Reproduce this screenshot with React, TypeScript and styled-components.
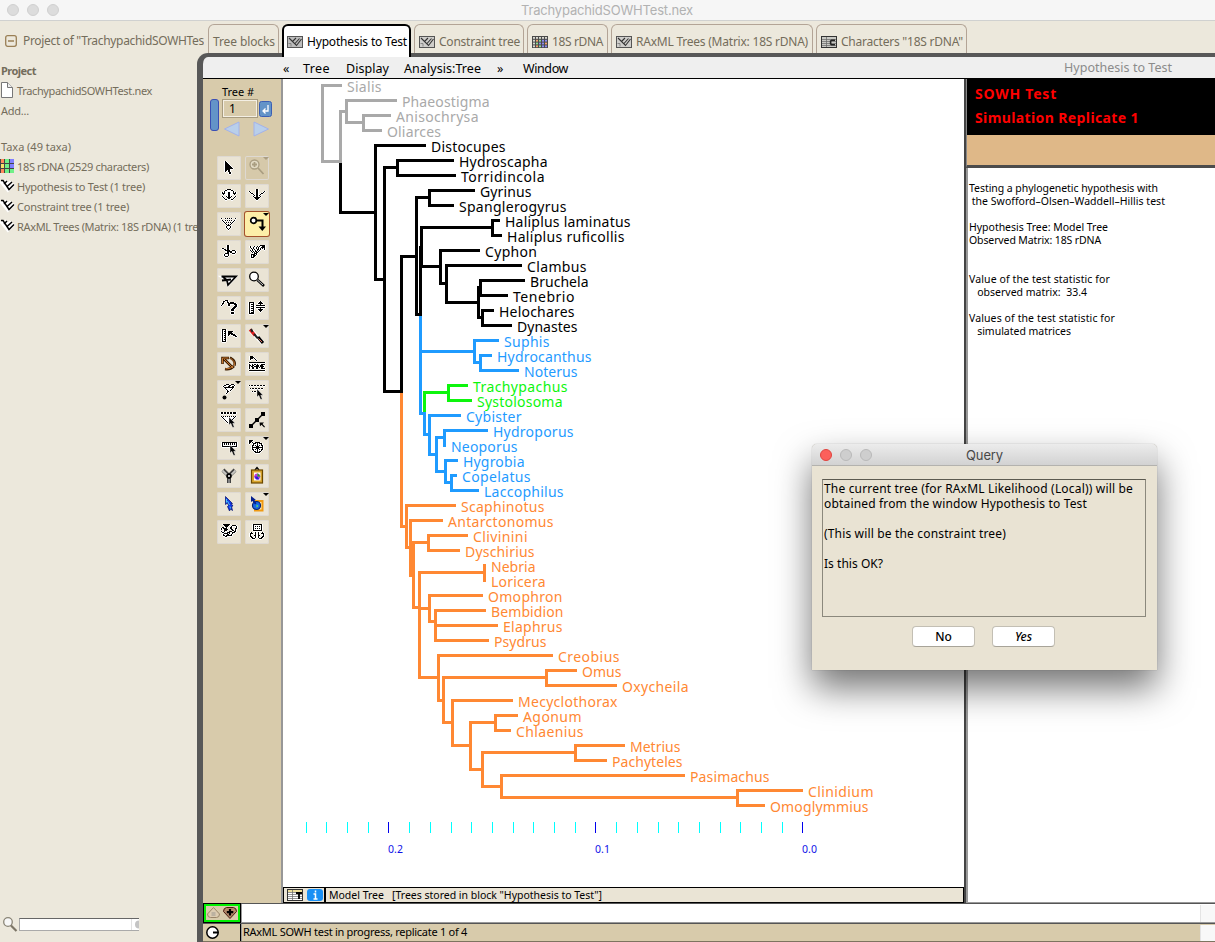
import React, { useLayoutEffect, useRef, useState } from "react";
import styled, { createGlobalStyle, css } from "styled-components";

const Global = createGlobalStyle`
  * { box-sizing: border-box; }
  html, body { margin: 0; padding: 0; overflow: hidden; }
  body { font-family: "Noto Sans", "Open Sans", sans-serif; font-size: 11px; color: #000; }
`;

/* ---------- text with a fixed advance width ---------- */

const FitBox = styled.span<{ $w: number }>`
  display: block;
  flex: none;
  width: ${(p) => p.$w}px;
  white-space: pre;
`;

function Fit({ w, children, className }: { w: number; children: string; className?: string }) {
  const ref = useRef<HTMLSpanElement>(null);
  const [tracking, setTracking] = useState(0);
  useLayoutEffect(() => {
    const natural = ref.current!.getBoundingClientRect().width;
    setTracking((w - natural) / children.length);
  }, []);
  return (
    <FitBox $w={w} className={className}>
      <span ref={ref} style={{ letterSpacing: tracking }}>{children}</span>
    </FitBox>
  );
}

/* ---------- window chrome ---------- */

const Window = styled.div`
  position: relative;
  display: flex;
  flex-direction: column;
  width: 1215px;
  height: 942px;
  overflow: hidden;
  background: #ece8dc;
`;

const TitleBar = styled.header`
  display: flex;
  align-items: center;
  flex: none;
  height: 21px;
  padding-left: 7px;
  background: #f6f6f6;
  border-bottom: 1px solid #d0d1d0;
  font-family: Inter, Roboto, sans-serif;
  font-size: 13px;
  color: #b2b2b2;
`;

const Light = styled.i<{ $c: string; $b: string }>`
  width: 12px;
  height: 12px;
  margin-right: 8px;
  border-radius: 50%;
  background: ${(p) => p.$c};
  border: 1px solid ${(p) => p.$b};
`;

const TitleText = styled.div`
  margin-left: 454px;
`;

const TabBar = styled.nav`
  display: flex;
  align-items: flex-end;
  flex: none;
  height: 32px;
  font-size: 12px;
  color: #746d5b;
  svg { flex: none; }
`;

const ProjectTab = styled.div`
  display: flex;
  align-items: center;
  gap: 6px;
  width: 204px;
  height: 29px;
  margin-right: 4px;
  padding: 4px 0 0 5px;
  overflow: hidden;
`;

const Tab = styled.div<{ $w: number; $active?: boolean }>`
  display: flex;
  align-items: center;
  gap: 4px;
  flex: none;
  width: ${(p) => p.$w}px;
  height: 29px;
  margin-right: 3px;
  padding: 5px 0 0 4px;
  border: 1px solid #b3a496;
  border-bottom: 0;
  border-radius: 6px 6px 0 0;
  ${(p) =>
    p.$active &&
    css`
      position: relative;
      z-index: 1;
      height: 33px;
      margin-bottom: -4px;
      padding: 0 0 0 3px;
      border: 2px solid #000;
      border-bottom: 0;
      background: #fff;
      color: #000;
    `}
`;

const Body = styled.div`
  display: flex;
  flex: 1;
  min-height: 0;
`;

const Sidebar = styled.aside`
  display: flex;
  flex-direction: column;
  width: 197px;
  padding-top: 7px;
  overflow: hidden;
  color: #746d5b;
`;

const SideRow = styled.div<{ $gap?: number; $bold?: boolean }>`
  display: flex;
  align-items: center;
  flex: none;
  height: 20px;
  padding-left: 1px;
  margin-top: ${(p) => p.$gap ?? 0}px;
  font-weight: ${(p) => (p.$bold ? 700 : 400)};
  svg { flex: none; margin-right: 1px; margin-left: -1px; }
`;

const SearchRow = styled.div`
  display: flex;
  align-items: center;
  margin-top: auto;
  height: 18px;
  margin-bottom: 9px;
  padding-left: 3px;
  gap: 1px;
`;

const SearchField = styled.div`
  width: 120px;
  height: 13px;
  background: #fff;
  border: 1px solid #aaa;
  border-top-color: #666;
  border-right: 0;
  display: flex;
  justify-content: flex-end;
`;

const Frame = styled.main`
  display: flex;
  flex-direction: column;
  flex: 1;
  min-width: 0;
  border-left: 6px solid #585858;
  border-top: 4px solid #585858;
  border-top-left-radius: 11px;
  background: #efefef;
`;

const MenuBar = styled.div`
  display: flex;
  align-items: center;
  flex: none;
  height: 22px;
  padding: 2px 0 0 80px;
  border-bottom: 1px solid #000;
  font-size: 12.5px;
`;

const MenuItem = styled(Fit)<{ $gap?: number }>`
  margin-right: ${(p) => p.$gap ?? 0}px;
`;

const MenuCaption = styled(Fit)`
  color: #8b8b8b;
  margin-top: -2px;
`;

const Work = styled.div`
  display: flex;
  flex: none;
  height: 824px;
`;

/* ---------- tool palette ---------- */

const Palette = styled.div`
  width: 78px;
  flex: none;
  background: #d8cbab;
`;

const Chooser = styled.div`
  display: flex;
  height: 77px;
  padding: 5px 0 0 7px;
`;

const BlueBar = styled.div`
  width: 9px;
  height: 32px;
  margin: 15px 3px 0 0;
  border: 1px solid #3b4fb4;
  border-radius: 3px;
  background: #6394c8;
`;

const ChooserMain = styled.div`
  display: flex;
  flex-direction: column;
`;

const NumberRow = styled.div`
  display: flex;
  align-items: center;
  gap: 1px;
`;

const NumberField = styled.div`
  width: 36px;
  height: 19px;
  padding-left: 6px;
  border: 1px solid #a89c80;
  outline: 1px solid #f4efe4;
  outline-offset: -2px;
  font-size: 12px;
  line-height: 17px;
`;

const ToolGrid = styled.div`
  display: grid;
  grid-template-columns: 24px 24px;
  grid-auto-rows: 24px;
  gap: 4px;
  padding-left: 14px;
`;

const ToolButton = styled.div<{ $state?: string }>`
  border-radius: 2px;
  background: ${(p) => (p.$state === "on" ? "#fdeea8" : p.$state === "dim" ? "#d6c9aa" : "#eae4d5")};
  box-shadow: ${(p) => (p.$state === "on" ? "0 0 0 1px #a4502a" : "inset 0 0 0 1px #ded9d2")};
  svg { display: block; }
`;

/* ---------- tree canvas ---------- */

const CanvasColumn = styled.div`
  display: flex;
  flex-direction: column;
  width: 683px;
  flex: none;
  border-left: 2px solid #979797;
  background: #fff;
`;

const TreeStatus = styled.div`
  display: flex;
  align-items: center;
  height: 16px;
  border: 1px solid #000;
  background: #eae4d5;
  font-size: 10.5px;
  padding-left: 3px;
  svg { flex: none; margin-right: 4px; }
`;

const StatusSplit = styled.div`
  width: 2px;
  height: 14px;
  margin: 0 3px 0 -3px;
  background: #000;
`;

/* ---------- result panel ---------- */

const Results = styled.section`
  flex: 1;
  display: flex;
  flex-direction: column;
  border-left: 2px solid #444;
`;

const ResultHead = styled.div`
  height: 56px;
  padding: 3px 0 0 8px;
  background: #000;
  color: #f00;
  font-size: 14px;
  font-weight: 700;
  line-height: 24px;
  border-left: 1px solid #888;
`;

const ResultTan = styled.div`
  height: 33px;
  border-left: 1px solid #888;
  background: #dfb888;
  border-bottom: 3px solid #4c4c4c;
`;

const ResultBody = styled.div`
  flex: 1;
  padding: 14px 0 0 1px;
  border-left: 2px solid #999;
  border-bottom: 1px solid #999;
  background: #fff;
  line-height: 13px;
  font-size: 10.5px;
`;

const Line = styled.div`
  height: 13px;
`;

/* ---------- bottom rows ---------- */

const BottomRow = styled.div<{ $fill: string; $h: number }>`
  display: flex;
  flex: none;
  height: ${(p) => p.$h}px;
  border-top: 1px solid #555;
  border-bottom: 1px solid ${(p) => (p.$fill === "#fff" ? "#999" : "#7d745f")};
  background: ${(p) => p.$fill};
`;

const GreenBox = styled.div`
  width: 36px;
  display: flex;
  align-items: center;
  justify-content: center;
  margin: 0 1px 0 1px;
  border: 2px solid #00ee00;
  box-shadow: 0 0 0 1px #000;
  background: #d8cbab;
`;

const ClockBox = styled.div`
  width: 38px;
  border-right: 1px solid #000;
  padding: 2px 0 0 3px;
`;

const RowText = styled.div`
  flex: 1;
  padding-left: 1px;
  border-left: 1px solid #999;
  line-height: 15px;
`;

const Corner = styled.div`
  width: 15px;
  margin-top: 1px;
  background: #f8f8f8;
  border-left: 1px solid #e4e4e4;
`;

/* ---------- dialog ---------- */

const Dialog = styled.div`
  position: absolute;
  left: 812px;
  top: 444px;
  width: 345px;
  height: 226px;
  display: flex;
  flex-direction: column;
  align-items: flex-start;
  border-radius: 5px 5px 0 0;
  background: #e9e3d3;
  box-shadow: 0 0 1px rgba(0, 0, 0, 0.45), 0 18px 36px rgba(0, 0, 0, 0.55);
`;

const DialogTitle = styled.div`
  display: flex;
  align-items: center;
  width: 100%;
  height: 22px;
  padding-left: 8px;
  border-bottom: 1px solid #b3b2ae;
  border-radius: 5px 5px 0 0;
  background: linear-gradient(#ececec, #d2d2d2);
  font: 13px Inter, Roboto, sans-serif;
  color: #484848;
`;

const DialogCaption = styled.div`
  margin-left: 86px;
`;

const Message = styled.div`
  width: 324px;
  height: 138px;
  margin: 13px 0 0 10px;
  padding: 1px 0 0 1px;
  border: 1px solid #8b887c;
  border-top-color: #5c5a50;
  font-size: 12px;
  line-height: 15px;
`;

const MessageLine = styled.div`
  height: 15px;
`;

const Buttons = styled.div`
  display: flex;
  gap: 17px;
  margin: 9px 0 0 100px;
`;

const Push = styled.button<{ $italic?: boolean }>`
  width: 63px;
  height: 21px;
  padding: 0;
  border: 1px solid #c3bfb4;
  border-bottom-color: #a8a499;
  border-radius: 4px;
  background: #fff;
  font: ${(p) => (p.$italic ? "italic" : "normal")} 500 12px "Noto Sans", sans-serif;
  color: #000;
`;

/* ---------- small glyphs ---------- */

function TreeTabIcon({ active }: { active?: boolean }) {
  return (
    <svg width="16" height="12" viewBox="0 0 16 12">
      <rect x=".5" y=".5" width="15" height="11" fill={active ? "#bdbdbd" : "#cfcecb"} stroke="#555" />
      <path d="M1.5 7.500h2.500v3" fill="none" stroke="#777" strokeWidth=".8" />
      <path d="M2 2l7.500 7.500L14.500 3M5.500 5.500L9 2M8 7.500l4.500-5" fill="none" stroke="#333" strokeWidth="1.100" />
    </svg>
  );
}

function MatrixTabIcon() {
  const cols = ["#f4a070", "#f4a070", "#92dd92", "#8c8cf0", "#8c8cf0"];
  return (
    <svg width="16" height="12" viewBox="0 0 16 12">
      <rect width="16" height="12" fill="#4a4a4a" />
      {[0, 1, 2, 3].map((r) =>
        [0, 1, 2, 3, 4].map((c) => (
          <rect key={`${r}${c}`} x={1 + c * 3} y={1 + r * 2.8} width="2" height="1.8" fill={r === 0 || c === 0 ? "#d8d8d0" : cols[(c + (r === 2 ? 1 : 0)) % 5]} />
        ))
      )}
    </svg>
  );
}

function ListTabIcon({ letter }: { letter: string }) {
  return (
    <svg width="16" height="12" viewBox="0 0 16 12">
      <rect x=".5" y=".5" width="15" height="11" fill={letter === "T" ? "#fff" : "#c9c9c4"} stroke="#333" />
      {letter === "T" && <rect x="1" y="1" width="14" height="2" fill="#eedf9c" />}
      <path d="M1 3.500h14M1 5.500h14M1 7.500h14M1 9.500h14M5.500 1v10" stroke="#666" strokeWidth=".7" />
      {letter === "T" ? (
        <path d="M9 4h6M12 4v6" stroke="#000" strokeWidth="1.800" />
      ) : (
        <path d="M14 4.200h-3.400l-1 1v2.600l1 1H14" fill="none" stroke="#222" strokeWidth="1.600" />
      )}
    </svg>
  );
}

function MiniTree() {
  return (
    <svg width="16" height="14" viewBox="0 0 16 14">
      <path d="M1 2L8 10.500 14 5M4 5L7 2M6.500 8L11.500 3" fill="none" stroke="#fff" strokeWidth="4" />
      <path d="M1 1.500h2L9 10.500 14 5.500M4 5L7 2M6.500 8L12 3" fill="none" stroke="#000" strokeWidth="1.500" />
    </svg>
  );
}

function MiniMatrix() {
  return (
    <svg width="16" height="16" viewBox="0 0 16 16" shapeRendering="crispEdges">
      <rect y="1" width="14" height="14" fill="#444" />
      <path d="M1 1h3v4H1zM1 11h3v4H1z" fill="#ff8a5c" />
      <path d="M1 6h3v4H1zM5 1h1v4H5z" fill="#f7e06c" />
      <path d="M5 1h4v4H5zM5 6h4v4H5zM5 11h4v4H5zM10 11h4v4h-4z" fill="#70f088" />
      <path d="M10 1h4v4h-4zM10 6h4v4h-4z" fill="#8080ff" />
    </svg>
  );
}

function FileIcon() {
  return (
    <svg width="16" height="18" viewBox="0 0 16 18">
      <path d="M1.500 1.500h6l5 5v10h-11z" fill="#fff" stroke="#777" />
      <path d="M7.500 1.500v5h5" fill="#eee" stroke="#777" />
    </svg>
  );
}

/* ---------- tool icons, drawn in a 24px button ---------- */

/* '#' is a black pixel, '.' a white one */
function Bits({ x, y, rows }: { x: number; y: number; rows: string[] }) {
  let black = "";
  let white = "";
  rows.forEach((row, j) =>
    [...row].forEach((ch, i) => {
      const cell = `M${x + i} ${y + j}h1v1h-1z`;
      if (ch === "#") {
        black += cell;
        white += `M${x + i - 1} ${y + j}h3v1h-3zM${x + i} ${y + j + 1}h1v1h-1z`;
      } else if (ch === ".") white += cell;
    })
  );
  return (
    <g shapeRendering="crispEdges">
      <path d={white} fill="#fff" />
      <path d={black} fill="#000" />
    </g>
  );
}

const Cursor = ({ x, y }: { x: number; y: number }) => (
  <path transform={`translate(${x} ${y})`} d="M0 0v8l1.800-1.700 1.700 4h1.800L3.700 6.300H6z" fill="#000" stroke="#fff" strokeWidth=".4" />
);
const K = { fill: "none", stroke: "#000", strokeWidth: 1.3 };
const White = { fill: "none", stroke: "#fff", strokeWidth: 3 };
const MenuMark = <path d="M18 1h6l-3 3z" fill="#000" />;

const tools: { state?: string; art: React.ReactNode }[] = [
  {
    art: (
      <Bits
        x={8}
        y={5}
        rows={["#", "##", "###", "####", "#####", "######", "#######", "########", "#####", "## ##", "#  ##", "    ##", "    ##"]}
      />
    ),
  },
  {
    state: "dim",
    art: (
      <g>
        <circle cx="9.500" cy="8.500" r="4.500" fill="#e2dac4" stroke="#aa9e82" strokeWidth="1.300" />
        <path d="M9.500 6v5M7 8.500h5M13 12l5.500 6" stroke="#aa9e82" strokeWidth="1.800" />
        <path d="M18 1h6l-3 3z" fill="#aa9e82" />
      </g>
    ),
  },
  {
    art: (
      <Bits
        x={5}
        y={5}
        rows={[
          "     ####     ",
          "   ##....##   ",
          "  #........#  ",
          "# #...##...# #",
          "###...##...###",
          " #....##....# ",
          "    . ## .    ",
          "#   #.##.#   #",
          " #  .####.  # ",
          "  #  .##.  #  ",
          "   ##    ##   ",
        ]}
      />
    ),
  },
  {
    art: (
      <Bits
        x={4}
        y={5}
        rows={[
          "       ##       ",
          "       ##       ",
          "#      ##      #",
          " #     ##     # ",
          "  ##   ##   ##  ",
          "    #  ##  #    ",
          "     # ## #     ",
          "    #  ##  #    ",
          "     ######     ",
          "      ####      ",
          "       ##       ",
        ]}
      />
    ),
  },
  {
    art: (
      <Bits
        x={4}
        y={6}
        rows={[
          "#   # # # #   #",
          "               ",
          " #  # # # #  # ",
          "  #         #  ",
          "   # # # # #   ",
          "    #     #    ",
          "     # # #     ",
          "      ###      ",
          "     #...#     ",
          "     #...#     ",
          "      #.#      ",
          "       #       ",
        ]}
      />
    ),
  },
  {
    state: "on",
    art: (
      <g>
        <circle cx="8.500" cy="8.500" r="2.800" fill="#fff" stroke="#000" strokeWidth="1.700" />
        <path d="M11.500 8.500h6V16" {...K} strokeWidth="2" />
        <path d="M13.500 14.500h7.500L17.300 19z" fill="#000" />
        {MenuMark}
      </g>
    ),
  },
  {
    art: (
      <Bits
        x={5}
        y={5}
        rows={[
          "     ##       ",
          "     ##       ",
          "     ##       ",
          "##   ##       ",
          "  ## ##       ",
          "   #####  ### ",
          "     #####...#",
          "     ## ##...#",
          "   ####   ### ",
          "  #...#       ",
          "  #...#       ",
          "   ###        ",
        ]}
      />
    ),
  },
  {
    art: (
      <Bits
        x={5}
        y={5}
        rows={[
          "          #####",
          "#   #  # #  ###",
          "#  #  # #  ####",
          " # #  # # # # #",
          "  # #  ## #   #",
          "# #  # # #     ",
          " # # ## #      ",
          "  # # ##       ",
          "    ###        ",
          " ####.#        ",
          " #.###         ",
          " #.##          ",
          " ###           ",
        ]}
      />
    ),
  },
  {
    art: (
      <g>
        <path d="M4.500 9h14L11 17l-1-4z" fill="#fff" stroke="#fff" strokeWidth="2.500" />
        <path d="M4.500 8.500H19L11 17l-1-4.500M5 12.500l9-1M6 9l5 4" {...K} strokeWidth="1.800" />
      </g>
    ),
  },
  {
    art: (
      <g>
        <circle cx="9" cy="8.500" r="4.300" fill="#fff" stroke="#000" strokeWidth="1.300" />
        <path d="M12.500 12l6.500 6" stroke="#000" strokeWidth="2.600" />
        <path d="M12.500 12l5.500 5" stroke="#fff" strokeWidth=".8" />
      </g>
    ),
  },
  {
    art: (
      <Bits
        x={4}
        y={4}
        rows={[
          "    ###         ",
          "  ##  #         ",
          "  #   ## ####   ",
          " ##    ######## ",
          " #     ##    ###",
          "#      ##     ##",
          "             ###",
          "            ### ",
          "           ###  ",
          "          ###   ",
          "          ###   ",
          "                ",
          "          ###   ",
          "          ###   ",
        ]}
      />
    ),
  },
  {
    art: (
      <Bits
        x={4}
        y={5}
        rows={[
          "           #    ",
          "#####     ###   ",
          "#...#    #####  ",
          "#.###      #    ",
          "#...#  #########",
          "#.###           ",
          "#...#  #########",
          "#.###      #    ",
          "#...#    #####  ",
          "#.###     ###   ",
          "#...#      #    ",
          "#.###           ",
          "#####           ",
        ]}
      />
    ),
  },
  {
    art: (
      <Bits
        x={5}
        y={5}
        rows={[
          "####           ",
          "#..#           ",
          "#.##  #####    ",
          "#..#  ####     ",
          "#.##  #####    ",
          "#..#  ## ####  ",
          "#.##  #    ### ",
          "#..#         ##",
          "#.##           ",
          "#..#           ",
          "#.##           ",
          "#..#           ",
          "####           ",
        ]}
      />
    ),
  },
  {
    art: (
      <g>
        <path d="M6 7l12 12" stroke="#fff" strokeWidth="4.500" />
        <path d="M5 5.500l5 6" stroke="#e02020" strokeWidth="3" />
        <path d="M6 5l1.500 3M9 10l3.500 4" stroke="#222" strokeWidth="2" />
        <path d="M13 13l5 6" stroke="#000" strokeWidth="3" />
        <path d="M13.500 14.500l3.500 3.500" stroke="#e07060" strokeWidth="1" />
        {MenuMark}
      </g>
    ),
  },
  {
    art: (
      <g fill="none">
        <path d="M7 7l9 9M5.500 12V6H12M13 5.500q6 3.500 4.500 8M8 17q5 1 9-3" stroke="#3a1c00" strokeWidth="2.600" />
        <path d="M7 7l9 9M5.500 11.500V6h6M13.500 6q5 3.500 4 7.500M8.500 17q5 0 8-3" stroke="#c87832" strokeWidth="1" />
      </g>
    ),
  },
  {
    art: (
      <Bits
        x={4}
        y={4}
        rows={[
          " ###            ",
          " ####           ",
          " ### #          ",
          " #    #         ",
          "       #        ",
          "                ",
          "################",
          "                ",
          "#  # ## #   ####",
          "## ##  ### ###  ",
          "# ## ##### #### ",
          "#  ##  ## # ##  ",
          "#  ##  ##   ####",
          "                ",
          "################",
        ]}
      />
    ),
  },
  {
    art: (
      <g>
        <Bits
          x={6}
          y={4}
          rows={[
            "   ###  ### ",
            " ##   ##   #",
            "#    ##  ## ",
            " ########## ",
            "  #......#  ",
            "   #....#   ",
            "    #..#    ",
            "    ##      ",
            "    #       ",
            "   #        ",
          ]}
        />
        <circle cx="7.500" cy="17.500" r="2" fill="#000" />
        {MenuMark}
      </g>
    ),
  },
  {
    art: (
      <g>
        <Bits x={4} y={5} rows={["# ## ## ## ## ##", "", "", " # ## ## ## ## ", "", "", "   # ## ##   "]} />
        <Cursor x={12} y={9} />
      </g>
    ),
  },
  {
    art: (
      <g>
        <Bits
          x={4}
          y={4}
          rows={["## ## ## ## ###", "## ## ## ## ###", "", "", "# # # # # # # #", " #...........# ", "  #.........#  ", "   #.......#   ", "    #....     ", "     #..      ", "      #.      "]}
        />
        <Cursor x={12} y={9} />
      </g>
    ),
  },
  {
    art: (
      <g>
        <path d="M6 18L18 6" {...K} strokeWidth="1.300" />
        <path d="M4 16h4v4H4zM10 10h4v4h-4zM16 4h4v4h-4z" fill="#000" />
        <path d="M14.500 14.500h4.500l-1.500 1.500 2.500 2.700-.8.800-2.700-2.700-1.500 1.500z" fill="#000" />
      </g>
    ),
  },
  {
    art: (
      <g>
        <Bits x={5} y={6} rows={["###############", "#.#.#.#.#.#.#.#", "#.#.#.#.#.#.#.#", "#.............#", "###############"]} />
        <Cursor x={13} y={9} />
      </g>
    ),
  },
  {
    art: (
      <g>
        <Bits
          x={4}
          y={4}
          rows={[
            "####           ",
            "###            ",
            "## #  #####    ",
            "#   ###.#.###  ",
            "    #...#...#  ",
            "   ##.#.#.#.## ",
            "   #...###...# ",
            "   ###########",
            "   #...###...# ",
            "   ##.#.#.#.## ",
            "    #...#...#  ",
            "     ##.#.##   ",
            "      #####    ",
          ]}
        />
        {MenuMark}
      </g>
    ),
  },
  {
    art: (
      <g>
        <path d="M6 6l5 5M18 6l-5 5M12 12v7" stroke="#444" strokeWidth="4" />
        <path d="M5.500 6.500l5 5M18.500 6.500l-5 5" stroke="#c9c9c4" strokeWidth="1.800" />
        <path d="M12 15v4" stroke="#999" strokeWidth="1.500" />
        <circle cx="12" cy="12" r="2.800" fill="#000" />
        <circle cx="12" cy="12" r="1" fill="#fff" />
      </g>
    ),
  },
  {
    art: (
      <g>
        <path d="M10 6l2-2.500L14 6" {...K} />
        <rect x="6.500" y="6" width="11" height="13" fill="#d9a52c" stroke="#6b4800" strokeWidth="1.200" />
        <rect x="9" y="8.500" width="6.500" height="8" fill="#fff" />
        <circle cx="12.200" cy="12.500" r="3" fill="#c43ad0" />
        <path d="M12.500 9l3 3.500h-3z" fill="#18b818" />
        <path d="M9.500 12.500h3l2 3h-3z" fill="#2222dd" />
      </g>
    ),
  },
  {
    art: (
      <g>
        <path d="M8.500 4.500v8l2-1.500 1 2.500-1 1 2 4.500 1-2 2 1.500-1-4 1.500-.5-2-2.500h1.500z" fill="#1436e8" stroke="#00106a" strokeWidth=".7" />
        <path d="M9.500 7v3.500M10.500 9l2 4M13 14.500l.5 2" stroke="#4cc8f4" strokeWidth="1" />
      </g>
    ),
  },
  {
    art: (
      <g>
        <path d="M10 9h7.500v9.500H9" fill="#ffe9b0" stroke="#f09a12" strokeWidth="2" />
        <circle cx="11.500" cy="13.500" r="4" fill="#1767e8" stroke="#04246e" strokeWidth="1.200" />
        <path d="M6 4v6l1.500-1 2.500 3.500 1.500-1L9.500 8H11z" fill="#04208e" />
        <path d="M11.500 12.500l2 1.500-2 1.500z" fill="#58ec58" />
        {MenuMark}
      </g>
    ),
  },
  {
    art: (
      <Bits
        x={4}
        y={4}
        rows={[
          "  #######       ",
          "   #####   #### ",
          "    ###   #    #",
          " ##  #   ##    #",
          "# ####   ##   ##",
          "#  ####   ##  # ",
          "   ###     ## # ",
          "#  #    ###  ## ",
          " ##   ###  ###  ",
          "   ####.#  #    ",
          "  #   ##  #     ",
          "  ## ######     ",
          "    ##          ",
        ]}
      />
    ),
  },
  {
    art: (
      <Bits
        x={5}
        y={4}
        rows={[
          "   #########  ",
          "   #.......#  ",
          "   #.#.#.#.#  ",
          "   #.......#  ",
          "   #.#.#.#.#  ",
          "   #.......#  ",
          "   #########  ",
          "              ",
          " #   #  #   # ",
          "###  #  #  ###",
          "#    #  #    #",
          "#   ##  ##   #",
          "##   #  #   ##",
          " ##  #  #  ## ",
          "  ###    ###  ",
        ]}
      />
    ),
  },
];

/* ---------- tree data ---------- */

type Tip = { name: string; end: number; x: number; r: number };
type Clade = { x: number; y: number; c?: string; kids: (Tip | Clade)[] };

const GRAY = "#a9a9a9";
const BLUE = "#1f9bff";
const GREEN = "#0df50d";
const ORANGE = "#ff8833";

const t = (name: string, end: number, x: number, r: number): Tip => ({ name, end, x, r });
const n = (x: number, y: number, kids: (Tip | Clade)[], c?: string): Clade => ({ x, y, kids, c });

const tree = n(322.5, 123.5, [
  t("Sialis", 342, 347, 381.5),
  n(340.5, 161.5, [
    n(346.5, 111.5, [
      t("Phaeostigma", 397, 402, 489.5),
      n(363.5, 122.5, [t("Anisochrysa", 391, 396, 478.5), t("Oliarces", 382, 387, 441)]),
    ]),
    n(375.5, 212.5, [
      t("Distocupes", 426, 431, 505.5),
      n(384.5, 279.5, [
        n(397.5, 167.5, [t("Hydroscapha", 454, 459, 547.5), t("Torridincola", 456, 461, 544.5)]),
        n(401.5, 391.5, [
          n(416.5, 256.5, [
            n(429.5, 197.5, [t("Gyrinus", 475, 480, 531.5), t("Spanglerogyrus", 454, 459, 566.5)]),
            n(420.5, 314.5, [
              n(421.5, 247.5, [
                n(492.5, 227.5, [t("Haliplus laminatus", 500, 505, 630.5), t("Haliplus ruficollis", 502, 507, 624.5)]),
                n(440.5, 266.5, [
                  t("Cyphon", 480, 485, 537),
                  n(446.5, 283.5, [
                    t("Clambus", 522, 527, 586.5),
                    n(478.5, 302.5, [
                      n(480.5, 287.5, [t("Bruchela", 525, 530, 588.5), t("Tenebrio", 508, 513, 574.5)]),
                      n(482.5, 317.5, [t("Helochares", 494, 499, 574.5), t("Dynastes", 512, 517, 577.5)]),
                    ]),
                  ]),
                ]),
              ]),
              n(420.5, 382.5, [
                n(474.5, 351.5, [
                  t("Suphis", 499, 504, 549.5),
                  n(480.5, 362.5, [t("Hydrocanthus", 492, 497, 591.5), t("Noterus", 519, 524, 577.5)]),
                ]),
                n(424.5, 413.5, [
                  n(448.5, 392.5, [t("Trachypachus", 468, 473, 567.5), t("Systolosoma", 472, 477, 562.5)], GREEN),
                  n(429.5, 434.5, [
                    t("Cybister", 461, 466, 521.5),
                    n(436.5, 454.5, [
                      n(444.5, 437.5, [t("Hydroporus", 488, 493, 573.5), t("Neoporus", 446, 451, 517.5)]),
                      n(445.5, 471.5, [
                        t("Hygrobia", 458, 463, 524.5),
                        n(451.5, 482.5, [t("Copelatus", 457, 462, 530.5), t("Laccophilus", 479, 484, 563.5)]),
                      ]),
                    ]),
                  ]),
                ]),
              ], BLUE),
            ]),
          ]),
          n(406.5, 526.5, [
            t("Scaphinotus", 456, 461, 544.5),
            n(410.5, 547.5, [
              t("Antarctonomus", 443, 448, 553.5),
              n(413.5, 575.5, [
                n(428.5, 542.5, [t("Clivinini", 468, 473, 527.5), t("Dyschirius", 460, 465, 534.5)]),
                n(419.5, 607.5, [
                  n(484.5, 572.5, [t("Nebria", 486, 491, 535.5), t("Loricera", 486, 491, 545.5)]),
                  n(429.5, 608.5, [
                    t("Omophron", 483, 488, 562.5),
                    n(435.5, 621.5, [
                      t("Bembidion", 486, 491, 563.5),
                      t("Elaphrus", 498, 503, 562.5),
                      t("Psydrus", 489, 494, 546.5),
                    ]),
                  ]),
                  n(438.5, 677.5, [
                    t("Creobius", 553, 558, 619.5),
                    n(443.5, 700.5, [
                      n(546.5, 677.5, [t("Omus", 577, 582, 621.5), t("Oxycheila", 617, 622, 688.5)]),
                      n(452.5, 722.5, [
                        t("Mecyclothorax", 513, 518, 617.5),
                        n(470.5, 745.5, [
                          n(495.5, 722.5, [t("Agonum", 518, 523, 581.5), t("Chlaenius", 511, 516, 583.5)]),
                          n(482.5, 769.5, [
                            n(575.5, 752.5, [t("Metrius", 625, 630, 680.5), t("Pachyteles", 607, 612, 682.5)]),
                            n(501.5, 786.5, [
                              t("Pasimachus", 685, 690, 769.5),
                              n(737.5, 797.5, [t("Clinidium", 803, 808, 873.5), t("Omoglymmius", 765, 770, 868.5)]),
                            ]),
                          ]),
                        ]),
                      ]),
                    ]),
                  ]),
                ]),
              ]),
            ]),
          ], ORANGE),
        ]),
      ]),
    ], "#000"),
  ]),
], GRAY);

function layoutTree() {
  const out: React.ReactNode[] = [];
  let row = 0;
  const walk = (node: Tip | Clade, px: number, py: number, inherited: string) => {
    if ("kids" in node) {
      const color = node.c ?? inherited;
      node.kids.forEach((k) => walk(k, node.x, node.y, color));
      out.push(<path key={out.length} d={`M${px} ${py}V${node.y}H${node.x}`} stroke={color} />);
      return;
    }
    const y = 85.5 + 15 * row++;
    out.push(<path key={out.length} d={`M${px} ${py}V${y}H${node.end - 1.5}`} stroke={inherited} />);
    out.push(
      <text key={out.length} x={node.x} y={y + 6} textLength={node.r - node.x} fill={inherited} stroke="none">
        {node.name}
      </text>
    );
  };
  walk(tree, tree.x, tree.y, GRAY);
  return out;
}

function TreeCanvas() {
  const ticks = Array.from({ length: 25 }, (_, i) => i);
  return (
    <svg width="681" height="808" viewBox="283 79 681 808" fontFamily="Noto Sans, Open Sans, sans-serif">
      <g fill="none" strokeWidth="3" strokeLinecap="square" fontSize="14">
        {layoutTree()}
      </g>
      {ticks.map((i) => (
        <rect key={i} x={Math.round(802.4 - i * 20.7)} y="822" width="1" height="11" fill={i % 10 ? "#00ffff" : "#0000ee"} />
      ))}
      <g fontSize="10.500" fill="#1010e8">
        <text x="388" y="853" textLength="15">0.2</text>
        <text x="595" y="853" textLength="15">0.1</text>
        <text x="802" y="853" textLength="15">0.0</text>
      </g>
    </svg>
  );
}

/* ---------- page ---------- */

const resultLines: [string, number][] = [
  ["Testing a phylogenetic hypothesis with", 189],
  [" the Swofford–Olsen–Waddell–Hillis test", 196],
  ["", 0],
  ["Hypothesis Tree: Model Tree", 139],
  ["Observed Matrix: 18S rDNA", 132],
  ["", 0],
  ["", 0],
  ["Value of the test statistic for", 141],
  ["   observed matrix:  33.4", 118],
  ["", 0],
  ["Values of the test statistic for", 146],
  ["   simulated matrices", 102],
];

const messageLines: [string, number][] = [
  ["The current tree (for RAxML Likelihood (Local)) will be", 309],
  ["obtained from the window Hypothesis to Test", 263],
  ["", 0],
  ["(This will be the constraint tree)", 182],
  ["", 0],
  ["Is this OK?", 59],
];

export default function App() {
  return (
    <Window>
      <Global />
      <TitleBar>
        <Light $c="#dcdcdc" $b="#d0d0d0" />
        <Light $c="#dcdcdc" $b="#d0d0d0" />
        <Light $c="#dcdcdc" $b="#d0d0d0" />
        <TitleText><Fit w={172}>TrachypachidSOWHTest.nex</Fit></TitleText>
      </TitleBar>

      <TabBar>
        <ProjectTab>
          <svg width="12" height="12" viewBox="0 0 12 12">
            <rect x=".7" y=".7" width="10.600" height="10.600" rx="2" fill="none" stroke="#9a7f55" strokeWidth="1.300" />
            <path d="M3 6h6" stroke="#9a7f55" strokeWidth="1.500" />
          </svg>
          <Fit w={181}>Project of "TrachypachidSOWHTes</Fit>
        </ProjectTab>
        <Tab $w={71}><Fit w={62}>Tree blocks</Fit></Tab>
        <Tab $w={129} $active><TreeTabIcon active /><Fit w={100}>Hypothesis to Test</Fit></Tab>
        <Tab $w={110}><TreeTabIcon /><Fit w={81}>Constraint tree</Fit></Tab>
        <Tab $w={81}><MatrixTabIcon /><Fit w={51}>18S rDNA</Fit></Tab>
        <Tab $w={202}><TreeTabIcon /><Fit w={172}>RAxML Trees (Matrix: 18S rDNA)</Fit></Tab>
        <Tab $w={151}><ListTabIcon letter="C" /><Fit w={122}>Characters "18S rDNA"</Fit></Tab>
      </TabBar>

      <Body>
        <Sidebar>
          <SideRow $bold><Fit w={35}>Project</Fit></SideRow>
          <SideRow><FileIcon /><Fit w={135}>TrachypachidSOWHTest.nex</Fit></SideRow>
          <SideRow><Fit w={28}>Add...</Fit></SideRow>
          <SideRow $gap={16}><Fit w={70}>Taxa (49 taxa)</Fit></SideRow>
          <SideRow><MiniMatrix /><Fit w={132}>18S rDNA (2529 characters)</Fit></SideRow>
          <SideRow><MiniTree /><Fit w={128}>Hypothesis to Test (1 tree)</Fit></SideRow>
          <SideRow><MiniTree /><Fit w={112}>Constraint tree (1 tree)</Fit></SideRow>
          <SideRow><MiniTree /><Fit w={190}>RAxML Trees (Matrix: 18S rDNA) (1 tree)</Fit></SideRow>
          <SearchRow>
            <svg width="15" height="16" viewBox="0 0 15 16">
              <circle cx="5" cy="6" r="4.300" fill="#f7f7f7" stroke="#8a8577" strokeWidth="1.300" />
              <path d="M8 9.500l5.500 5.500" stroke="#7c7566" strokeWidth="2.200" />
            </svg>
            <SearchField>
              <svg width="8" height="11" viewBox="0 0 8 11">
                <path d="M.5 0v11" stroke="#e2e2e2" />
                <circle cx="8" cy="5.500" r="4" fill="#c4c4c4" />
              </svg>
            </SearchField>
          </SearchRow>
        </Sidebar>

        <Frame>
          <MenuBar>
            <MenuItem w={7} $gap={13}>«</MenuItem>
            <MenuItem w={27} $gap={16}>Tree</MenuItem>
            <MenuItem w={43} $gap={15}>Display</MenuItem>
            <MenuItem w={77} $gap={16}>Analysis:Tree</MenuItem>
            <MenuItem w={7} $gap={19}>»</MenuItem>
            <MenuItem w={45} $gap={496}>Window</MenuItem>
            <MenuCaption w={108}>Hypothesis to Test</MenuCaption>
          </MenuBar>

          <Work>
            <Palette>
              <Chooser>
                <BlueBar />
                <ChooserMain>
                  <Fit w={32}>Tree #</Fit>
                  <NumberRow>
                    <NumberField>1</NumberField>
                    <svg width="13" height="16" viewBox="0 0 13 16">
                      <rect x=".5" y=".5" width="12" height="15" rx="2" fill="#6394c8" stroke="#3b5fb4" />
                      <path d="M9 4v6H5M6.500 7.500L4 10l2.500 2.500" fill="none" stroke="#fff" strokeWidth="1.300" />
                    </svg>
                  </NumberRow>
                  <svg width="50" height="20" viewBox="0 0 50 20">
                    <path d="M2.500 11L17 4v14zM46.500 11L32 4v14z" fill="#b9cfea" stroke="#a3b2ea" strokeLinejoin="round" />
                  </svg>
                </ChooserMain>
              </Chooser>
              <ToolGrid>
                {tools.map((tool, i) => (
                  <ToolButton key={i} $state={tool.state}>
                    <svg width="24" height="24" viewBox="0 0 24 24">{tool.art}</svg>
                  </ToolButton>
                ))}
              </ToolGrid>
            </Palette>

            <CanvasColumn>
              <TreeCanvas />
              <TreeStatus>
                <ListTabIcon letter="T" />
                <svg width="16" height="12" viewBox="0 0 16 12">
                  <rect width="16" height="12" rx="3" fill="#1990f5" />
                  <path d="M8.500 1.500v2M6.500 5h2v4.500M6.500 10h4" fill="none" stroke="#fff" strokeWidth="1.500" />
                </svg>
                <StatusSplit />
                <Fit w={273}>{'Model Tree   [Trees stored in block "Hypothesis to Test"]'}</Fit>
              </TreeStatus>
            </CanvasColumn>

            <Results>
              <ResultHead>
                <Fit w={82}>SOWH Test</Fit>
                <Fit w={164}>Simulation Replicate 1</Fit>
              </ResultHead>
              <ResultTan />
              <ResultBody>
                {resultLines.map(([text, w], i) => (
                  <Line key={i}>{text && <Fit w={w}>{text}</Fit>}</Line>
                ))}
              </ResultBody>
            </Results>
          </Work>

          <BottomRow $fill="#fff" $h={20}>
            <GreenBox>
              <svg width="32" height="14" viewBox="0 0 32 14">
                <path d="M7.500 1.500l6 6.500q0 3.500-3 3.500h-6q-3 0-3-3.500z" fill="#dccbb0" stroke="#9a8468" />
                <path d="M5.500 7h4M5.500 9h4" stroke="#8a8a8a" strokeWidth=".8" />
                <path d="M24 12.500l-6.500-7q0-3.500 3-4h7q3 .500 3 4z" fill="#b48a6a" stroke="#4a1a10" />
                <path d="M24 3v6.500M20.800 6.200h6.500" stroke="#000" strokeWidth="2.200" />
              </svg>
            </GreenBox>
            <RowText />
            <Corner />
          </BottomRow>
          <BottomRow $fill="#d8cbab" $h={19}>
            <ClockBox>
              <svg width="14" height="14" viewBox="0 0 14 14">
                <circle cx="6.500" cy="6.500" r="5.700" fill="#fff" stroke="#000" strokeWidth="1.500" />
                <path d="M7 6.500h5.500" stroke="#000" strokeWidth="2" />
              </svg>
            </ClockBox>
            <RowText><Fit w={224}>RAxML SOWH test in progress, replicate 1 of 4</Fit></RowText>
            <Corner />
          </BottomRow>
        </Frame>
      </Body>

      <Dialog>
        <DialogTitle>
          <Light $c="#fc605b" $b="#e0443e" />
          <Light $c="#cecece" $b="#b9b9b9" />
          <Light $c="#cecece" $b="#b9b9b9" />
          <DialogCaption><Fit w={37}>Query</Fit></DialogCaption>
        </DialogTitle>
        <Message>
          {messageLines.map(([text, w], i) => (
            <MessageLine key={i}>{text && <Fit w={w}>{text}</Fit>}</MessageLine>
          ))}
        </Message>
        <Buttons>
          <Push>No</Push>
          <Push $italic>Yes</Push>
        </Buttons>
      </Dialog>
    </Window>
  );
}
